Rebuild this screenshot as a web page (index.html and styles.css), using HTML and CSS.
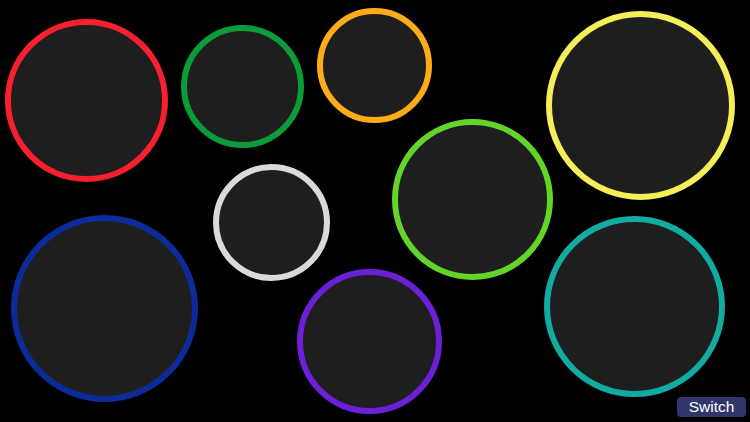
FILE: index.html
```html
<!DOCTYPE html>
<html>
<head>
<meta charset="utf-8">
<link rel="stylesheet" href="styles.css">
</head>
<body>
<div class="canvas">
  <div class="ring red"></div>
  <div class="ring green"></div>
  <div class="ring orange"></div>
  <div class="ring yellow"></div>
  <div class="ring lime"></div>
  <div class="ring white"></div>
  <div class="ring blue"></div>
  <div class="ring purple"></div>
  <div class="ring teal"></div>
  <button class="switch">Switch</button>
</div>
</body>
</html>
```
FILE: styles.css
```css
html, body {
  margin: 0;
  padding: 0;
  background: #000;
}
.canvas {
  position: relative;
  width: 750px;
  height: 422px;
  overflow: hidden;
  background: #000;
}
.ring {
  position: absolute;
  box-sizing: border-box;
  border-radius: 50%;
  border: 6px solid #fff;
  background: #1e1e1e;
}
.red    { left: 5px;   top: 19px;  width: 163px; height: 163px; border-color: #f81f2f; }
.green  { left: 181px; top: 25px;  width: 123px; height: 123px; border-color: #0b9b38; border-width: 6.5px; }
.orange { left: 317px; top: 8px;   width: 115px; height: 115px; border-color: #fcab19; }
.yellow { left: 546px; top: 11px;  width: 189px; height: 189px; border-color: #f4ee58; }
.lime   { left: 392px; top: 119px; width: 161px; height: 161px; border-color: #62d42a; }
.white  { left: 213px; top: 164px; width: 117px; height: 117px; border-color: #dcd8dc; }
.blue   { left: 11px;  top: 215px; width: 187px; height: 187px; border-color: #0b2b9a; }
.purple { left: 297px; top: 269px; width: 145px; height: 145px; border-color: #6b1fd6; }
.teal   { left: 544px; top: 216px; width: 181px; height: 181px; border-color: #11ab9f; }
.switch {
  position: absolute;
  left: 677px;
  top: 397px;
  width: 69px;
  height: 20px;
  margin: 0;
  padding: 0;
  border: none;
  border-radius: 4px;
  background: #30366a;
  color: #fff;
  font-family: "Liberation Sans", Arial, sans-serif;
  font-size: 15.5px;
  line-height: 20px;
  text-align: center;
}
```
